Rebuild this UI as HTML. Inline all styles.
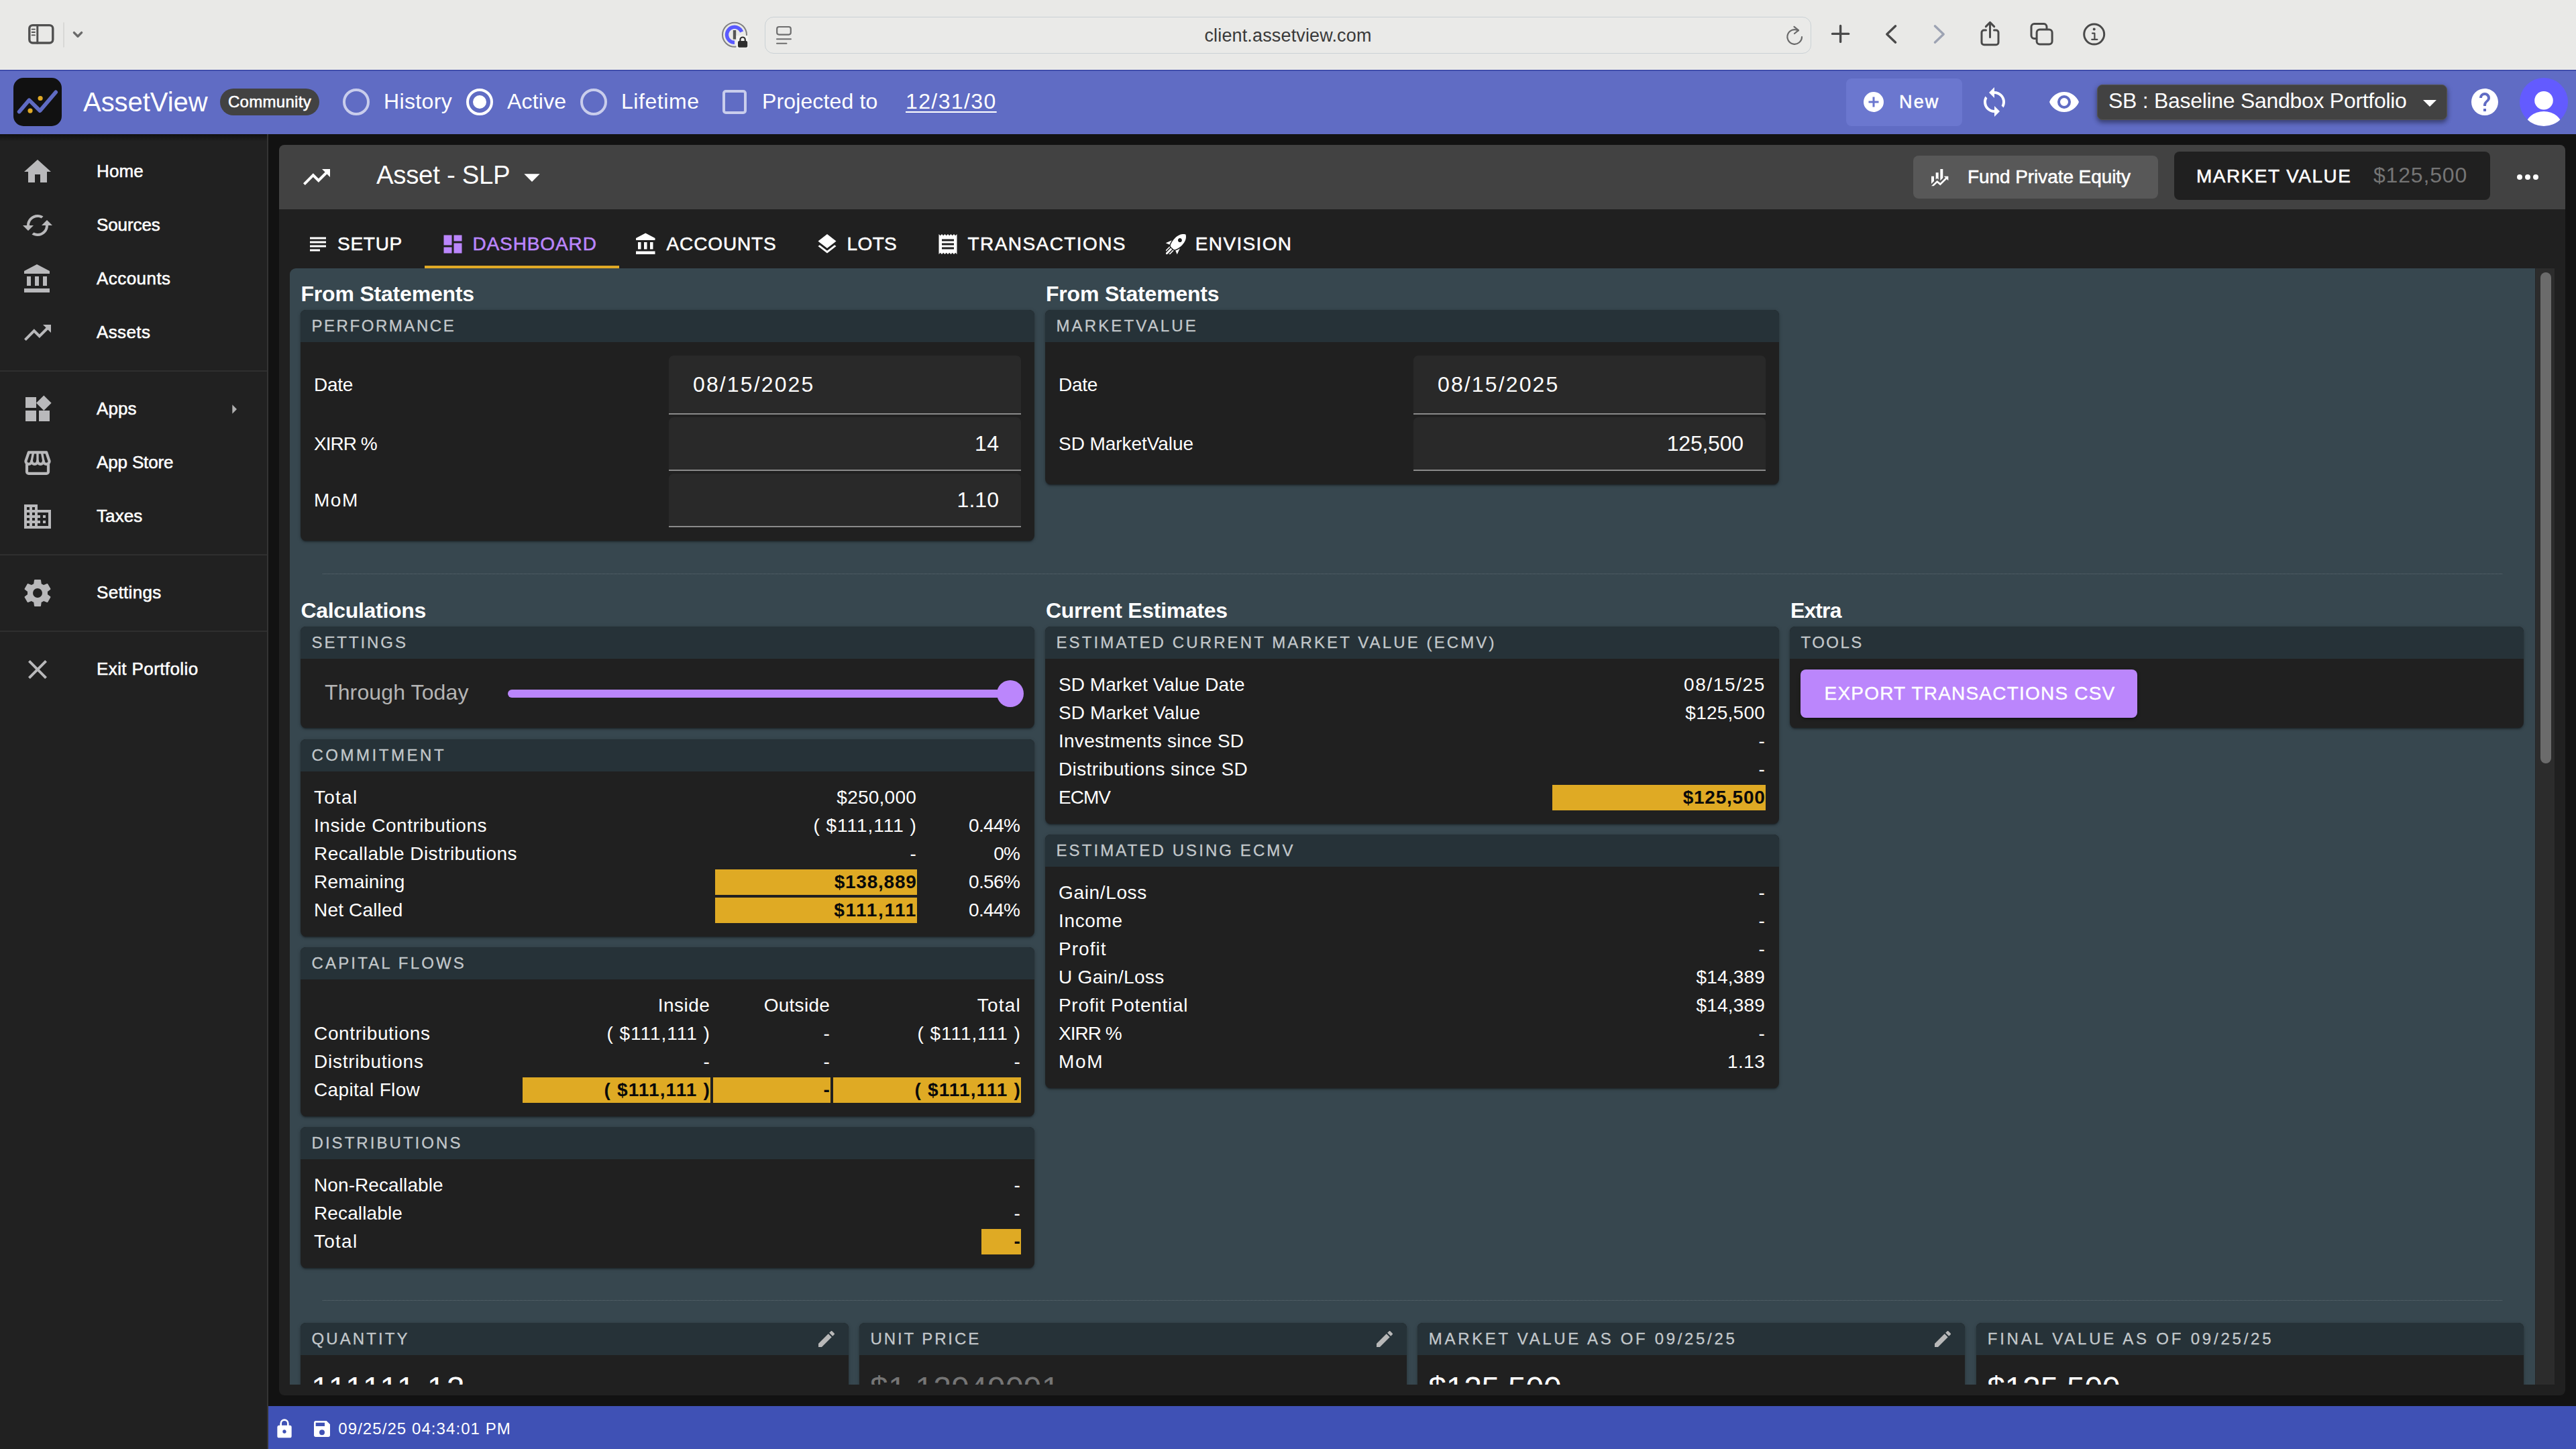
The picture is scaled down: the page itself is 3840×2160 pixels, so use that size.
<!DOCTYPE html>
<html lang="en"><head>
<meta charset="utf-8">
<title>AssetView</title>
<style>
*{box-sizing:border-box;margin:0;padding:0}
html,body{width:3840px;height:2160px;overflow:hidden;background:#121212}
body{font-family:"Liberation Sans",sans-serif;color:#fff;position:relative;-webkit-font-smoothing:antialiased}
.abs{position:absolute}
svg{display:block}
.m{-webkit-text-stroke:.55px currentColor}
.ch.m{-webkit-text-stroke:.3px currentColor}
#exp.m{-webkit-text-stroke:.4px currentColor;box-shadow:0 3px 2px -2px rgba(0,0,0,.3),0 2px 3px rgba(0,0,0,.2),0 1px 6px rgba(0,0,0,.16)}
/* ---------- browser chrome ---------- */
#chrome{position:absolute;left:0;top:0;width:3840px;height:104px;background:#e9e9e7;border-bottom:1px solid #f3f3ee}
#url{position:absolute;left:1140px;top:25px;width:1560px;height:55px;border:1.5px solid #cad1d5;border-radius:13px;background:#eaeae8}
#urltxt{position:absolute;left:0;top:0;width:3840px;text-align:center;font-size:27px;line-height:107px;color:#3a3a3a;letter-spacing:.45px}
/* ---------- app bar ---------- */
#appbar{position:absolute;left:0;top:104px;width:3840px;height:96px;background:#606cc4;border-top:1px solid #34409f;box-shadow:inset 0 1px 0 #4a58b6}
#logo{position:absolute;left:20px;top:116px;width:72px;height:72px;border-radius:15px;background:#111}
#brand{position:absolute;left:124px;top:128px;font-size:40px;line-height:48px;letter-spacing:0px}
#chip{position:absolute;left:328px;top:132px;width:148px;height:40px;border-radius:20px;background:#424242;font-size:24px;line-height:40px;text-align:center}
.radio{position:absolute;top:132px;width:40px;height:40px;border-radius:50%;border:4px solid #c9cdec}
.radio.on{border-color:#fff}
.radio.on:after{content:"";position:absolute;left:6px;top:6px;width:20px;height:20px;border-radius:50%;background:#fff}
.ab32{position:absolute;top:131px;font-size:32px;line-height:40px;white-space:nowrap}
#cbx{position:absolute;left:1077px;top:134px;width:36px;height:36px;border-radius:5px;border:4px solid #c9cdec}
#newbtn{position:absolute;left:2752px;top:117px;width:173px;height:71px;border-radius:8px;background:#6b77cf}
#pfsel{position:absolute;left:3126px;top:126px;width:522px;height:52.500px;border-radius:8px;background:#424242;border:1px solid #545454;box-shadow:0 4px 6px rgba(0,0,0,.3),0 2px 10px rgba(0,0,0,.2)}
#avatar{position:absolute;left:3756px;top:116px;width:72px;height:72px;border-radius:50%;background:#635bff;overflow:hidden}
/* ---------- sidebar ---------- */
#sidebar{position:absolute;left:0;top:200px;width:400px;height:1960px;background:#212121;border-right:2px solid #343434}
.nav{position:absolute;left:0;width:398px;height:80px}
.nav svg{position:absolute;left:32px;top:16px;width:48px;height:48px;fill:#b9b9bb}
.nav span{position:absolute;left:144px;top:-1px;font-size:26px;line-height:80px;white-space:nowrap}
.ndiv{position:absolute;left:0;width:398px;height:2px;background:#2f2f2f}
/* ---------- main card ---------- */
#card{position:absolute;left:416px;top:216px;width:3408px;height:1864px;border-radius:8px;background:#202020;overflow:hidden}
#tbar{position:absolute;left:0;top:0;width:3408px;height:96px;background:#424242}
#panel{position:absolute;left:16px;top:184px;width:3347px;height:1664px;background:#37474f;border-top-left-radius:9px;overflow:hidden}
#sbar{position:absolute;left:3363px;top:184px;width:29px;height:1664px;background:#2c2c2c;border-left:1px solid #262626}
#sthumb{position:absolute;left:7px;top:6px;width:16px;height:732px;border-radius:8px;background:#6b6b6b}
.tab{font-size:28px;line-height:40px;letter-spacing:3.4px;white-space:nowrap}

/* ---------- panel content ---------- */
.h{position:absolute;font-size:32px;line-height:40px;font-weight:700;white-space:nowrap;letter-spacing:-.1px}
.c{position:absolute;border-radius:8px;background:#202020;overflow:hidden;box-shadow:0 3px 2px -2px rgba(0,0,0,.3),0 2px 3px rgba(0,0,0,.2),0 1px 6px rgba(0,0,0,.16)}
.ch{height:48px;background:#263238;color:#c3c8cb;font-size:24px;line-height:48px;letter-spacing:6.3px;padding-left:16.5px;white-space:nowrap;position:relative}
.ch svg{position:absolute;right:17px;top:8px;width:32px;height:32px;fill:#b8b8b8}
.cb{padding:20px 20px 0 20px}
.r{position:relative;height:38px;margin-bottom:4px;font-size:28px;line-height:37px;letter-spacing:.6px;white-space:nowrap}
.r span{position:absolute;top:0;height:38px;text-align:right;padding-right:2px;letter-spacing:1.1px}
.r .g{background:#dfaa24;color:#0a0a0a;font-weight:700;letter-spacing:.9px}
.r .lb{left:0;text-align:left;letter-spacing:.6px}
.fl{position:absolute;left:20px;font-size:28px;line-height:40px;letter-spacing:.2px;white-space:nowrap}
.fd{position:absolute;left:549px;width:525px;background:#292929;border-bottom:2px solid #8a8a8a;border-radius:7px 7px 0 0;font-size:32px;line-height:40px;letter-spacing:3.2px;white-space:nowrap}
.fd span{position:absolute}
.hr{position:absolute;left:49px;width:3249px;height:0;border-top:1.5px dotted rgba(255,255,255,.2)}
.big{position:absolute;left:16px;top:18.4px;font-size:48px;line-height:64px;white-space:nowrap;letter-spacing:2.4px}
/* ---------- footer ---------- */
#footer{position:absolute;left:400px;top:2096px;width:3440px;height:64px;background:#3f51b5}
</style>
</head>
<body>
<div id="chrome">
  <div id="url"></div>
  <svg class="abs" style="left:0;top:0" width="3840" height="104" viewBox="0 0 3840 104" fill="none" stroke-linecap="round" stroke-linejoin="round">
    <!-- sidebar toggle -->
    <rect x="43.8" y="37.6" width="35" height="26.4" rx="5" stroke="#505050" stroke-width="3.4"></rect>
    <path d="M55.8 38V64" stroke="#505050" stroke-width="3"></path>
    <path d="M47.6 43.6H52M47.6 48H52M47.6 52.4H52" stroke="#505050" stroke-width="1.8"></path>
    <path d="M95 34V70" stroke="#d2d2d0" stroke-width="1.5"></path>
    <path d="M110.4 48.6L116 54.2L121.6 48.6" stroke="#6a6a6a" stroke-width="3.4"></path>
    <!-- password manager icon -->
    <circle cx="1095" cy="51.8" r="18" stroke="#808080" stroke-width="2"></circle>
    <path d="M1095 63.300A11.500 11.500 0 1 1 1105.700 47.600" stroke="#5a5aff" stroke-width="5.400" stroke-linecap="butt"></path>
    <rect x="1092.8" y="45" width="4.4" height="13.6" fill="#555" stroke="none"></rect>
    <rect x="1097.5" y="53" width="18" height="19" fill="#f3f3f1" stroke="none"></rect>
    <rect x="1100" y="61" width="14.2" height="9.8" rx="2" fill="#2e2e2e" stroke="none"></rect>
    <path d="M1103.4 61.5V59.2A3.7 3.7 0 0 1 1110.8 59.2V61.5" stroke="#2e2e2e" stroke-width="2.2"></path>
    <!-- reader icon -->
    <rect x="1158.2" y="40" width="20.6" height="11.6" rx="3" stroke="#6e6e6e" stroke-width="2.2"></rect>
    <path d="M1158 58.2H1179M1158 64.8H1172.5" stroke="#6e6e6e" stroke-width="2"></path>
    <!-- reload -->
    <path d="M2680.6 45.6A10.8 10.8 0 1 0 2686 55" stroke="#6a6a6a" stroke-width="2.2"></path>
    <path d="M2674.5 39.8L2681 45.2L2675 50" stroke="#6a6a6a" stroke-width="2.2"></path>
    <!-- plus -->
    <path d="M2731.5 50.4H2755.7M2743.6 38.4V62.4" stroke="#4a4a4a" stroke-width="3.4"></path>
    <!-- back / forward -->
    <path d="M2825.6 38.8L2812.8 51L2825.6 63.2" stroke="#4a4a4a" stroke-width="3.4"></path>
    <path d="M2884.4 38.8L2897.2 51L2884.4 63.2" stroke="#9da3b3" stroke-width="3.4"></path>
    <!-- share -->
    <path d="M2960.5 45H2957.5A3.5 3.5 0 0 0 2954 48.500V63.3A3.5 3.5 0 0 0 2957.5 66.800H2975.500A3.5 3.5 0 0 0 2979 63.3V48.5A3.5 3.5 0 0 0 2975.500 45H2972.500" stroke="#4a4a4a" stroke-width="3"></path>
    <path d="M2966.500 55.400V34M2960.300 39.600L2966.500 33.400L2972.700 39.600" stroke="#4a4a4a" stroke-width="3"></path>
    <!-- tabs -->
    <path d="M3034.600 57.500H3032.500A4.500 4.500 0 0 1 3028 53V40A4.500 4.500 0 0 1 3032.500 35.500H3046.500A4.500 4.500 0 0 1 3051 40V42.400" stroke="#4a4a4a" stroke-width="3"></path>
    <rect x="3036.100" y="43.900" width="23" height="22" rx="4.500" stroke="#4a4a4a" stroke-width="3"></rect>
    <!-- info -->
    <circle cx="3121.700" cy="51.100" r="15" stroke="#4a4a4a" stroke-width="3"></circle>
    <circle cx="3121.700" cy="43.600" r="2" fill="#4a4a4a" stroke="none"></circle>
    <path d="M3119 49.600H3122.400V58.600M3118.200 58.800H3126.400" stroke="#4a4a4a" stroke-width="2.200"></path>
  </svg>
  <div id="urltxt" style="letter-spacing: 0.15px;">client.assetview.com</div>
</div>
<div id="appbar"></div>
<div id="logo"><svg width="72" height="72" viewBox="0 0 72 72" fill="none"><path d="M8.600 50.600L23.500 33.200L39.600 49.100L63.200 21.300" stroke="#5f6bc3" stroke-width="5.700" stroke-linecap="round" stroke-linejoin="round"></path><circle cx="40.100" cy="30.500" r="3.600" fill="#e0a925"></circle><circle cx="25" cy="49.100" r="3.600" fill="#e0a925"></circle></svg></div>
<div id="brand" style="letter-spacing: -0.05px;">AssetView</div>
<div id="chip" class="m" style="letter-spacing: 0.29px;">Community</div>
<div class="radio" style="left:511px"></div><div class="ab32" style="left: 572px; letter-spacing: 0.37px;">History</div>
<div class="radio on" style="left:695px"></div><div class="ab32" style="left: 756px; letter-spacing: 0.2px;">Active</div>
<div class="radio" style="left:865px"></div><div class="ab32" style="left: 926px; letter-spacing: 0.57px;">Lifetime</div>
<div id="cbx"></div><div class="ab32" style="left: 1136px; letter-spacing: 0.13px;">Projected to</div>
<div class="ab32" style="left: 1350px; text-decoration: underline 2px; text-underline-offset: 4px; letter-spacing: 1.39px;">12/31/30</div>
<div id="newbtn"></div>
<svg class="abs" style="left:2775px;top:134px" width="36" height="36" viewBox="0 0 24 24" fill="#fff"><path d="M17,13H13V17H11V13H7V11H11V7H13V11H17M12,2A10,10 0 0,0 2,12A10,10 0 0,0 12,22A10,10 0 0,0 22,12A10,10 0 0,0 12,2Z"></path></svg>
<div id="newtxt" class="abs m" style="left: 2831px; top: 132px; font-size: 27px; line-height: 40px; letter-spacing: 2.14px;">New</div>
<svg class="abs" style="left:2949px;top:128px" width="48" height="48" viewBox="0 0 24 24" fill="#fff"><path d="M12,18A6,6 0 0,1 6,12C6,11 6.250,10.030 6.700,9.200L5.240,7.740C4.460,8.970 4,10.430 4,12A8,8 0 0,0 12,20V23L16,19L12,15M12,4V1L8,5L12,9V6A6,6 0 0,1 18,12C18,13 17.750,13.970 17.300,14.800L18.760,16.260C19.540,15.030 20,13.570 20,12A8,8 0 0,0 12,4Z"></path></svg>
<svg class="abs" style="left:3053px;top:128px" width="48" height="48" viewBox="0 0 24 24" fill="#fff"><path d="M12,9A3,3 0 0,0 9,12A3,3 0 0,0 12,15A3,3 0 0,0 15,12A3,3 0 0,0 12,9M12,17A5,5 0 0,1 7,12A5,5 0 0,1 12,7A5,5 0 0,1 17,12A5,5 0 0,1 12,17M12,4.500C7,4.500 2.730,7.610 1,12C2.730,16.390 7,19.500 12,19.500C17,19.500 21.270,16.390 23,12C21.270,7.610 17,4.500 12,4.500Z"></path></svg>
<div id="pfsel"></div>
<div id="pftxt" class="abs" style="left: 3143px; top: 130px; font-size: 32px; line-height: 40px; white-space: nowrap; letter-spacing: -0.29px;">SB : Baseline Sandbox Portfolio</div>
<svg class="abs" style="left:3598px;top:129px" width="48" height="48" viewBox="0 0 24 24" fill="#fff"><path d="M7,10L12,15L17,10H7Z"></path></svg>
<svg class="abs" style="left:3680px;top:128px" width="48" height="48" viewBox="0 0 24 24" fill="#fff"><path d="M15.070,11.250L14.170,12.170C13.450,12.890 13,13.500 13,15H11V14.500C11,13.390 11.450,12.390 12.170,11.670L13.410,10.410C13.780,10.050 14,9.550 14,9C14,7.890 13.100,7 12,7A2,2 0 0,0 10,9H8A4,4 0 0,1 12,5A4,4 0 0,1 16,9C16,9.880 15.640,10.670 15.070,11.250M13,19H11V17H13M12,2A10,10 0 0,0 2,12A10,10 0 0,0 12,22A10,10 0 0,0 22,12C22,6.470 17.500,2 12,2Z"></path></svg>
<div id="avatar"><svg width="72" height="72" viewBox="0 0 72 72" fill="#fff"><circle cx="36" cy="33.700" r="13.800"></circle><ellipse cx="36" cy="73" rx="27.500" ry="23"></ellipse></svg></div>
<div id="sidebar">
<div class="nav" style="top:16px"><svg viewBox="0 0 24 24"><path d="M10,20V14H14V20H19V12H22L12,3L2,12H5V20H10Z"></path></svg><span class="m" style="letter-spacing: 0.14px;">Home</span></div>
<div class="nav" style="top:96px"><svg viewBox="0 0 24 24"><path d="M19,8L15,12H18A6,6 0 0,1 12,18C11,18 10.030,17.750 9.200,17.300L7.740,18.760C8.970,19.540 10.430,20 12,20A8,8 0 0,0 20,12H23M6,12A6,6 0 0,1 12,6C13,6 13.970,6.250 14.800,6.700L16.260,5.240C15.030,4.460 13.570,4 12,4A8,8 0 0,0 4,12H1L5,16L9,12"></path></svg><span class="m" style="letter-spacing: -0.1px;">Sources</span></div>
<div class="nav" style="top:176px"><svg viewBox="0 0 24 24"><path d="M11.500,1L2,6V8H21V6M16,10V17H19V10M2,22H21V19H2M10,10V17H13V10M4,10V17H7V10H4Z"></path></svg><span class="m" style="letter-spacing: 0.45px;">Accounts</span></div>
<div class="nav" style="top:256px"><svg viewBox="0 0 24 24"><path d="M16,6L18.290,8.290L13.410,13.170L9.410,9.170L2,16.590L3.410,18L9.410,12L13.410,16L19.710,9.710L22,12V6H16Z"></path></svg><span class="m" style="letter-spacing: 0.39px;">Assets</span></div>
<div class="ndiv" style="top:352px"></div>
<div class="nav" style="top:370px"><svg viewBox="0 0 24 24"><path d="M3,3H11V11H3V3M3,13H11V21H3V13M13,13H21V21H13V13M16.660,1.690L22.310,7.340L16.660,13L11,7.340L16.660,1.690Z"></path></svg><span class="m" style="letter-spacing: 0.12px;">Apps</span><svg viewBox="0 0 24 24" style="left:333px;top:24px;width:32px;height:32px;fill:#b0b0b0"><path d="M10,17L15,12L10,7V17Z"></path></svg></div>
<div class="nav" style="top:450px"><svg viewBox="0 0 48 48" style="fill:none;stroke:#b9b9bb;stroke-width:4.200;stroke-linejoin:round"><path d="M10.800 8.400H37.200L41.600 21.400A4.400 4.400 0 0 1 32.800 21.400A4.400 4.400 0 0 1 24 21.400A4.400 4.400 0 0 1 15.200 21.400A4.400 4.400 0 0 1 6.400 21.400Z"></path><path d="M17.600 8.400L15.200 21M24 8.400V21M30.400 8.400L32.800 21" stroke-width="3.400"></path><path d="M8 26V37.200A2.600 2.600 0 0 0 10.600 39.800H37.400A2.600 2.600 0 0 0 40 37.200V26"></path></svg><span class="m" style="letter-spacing: -0.15px;">App Store</span></div>
<div class="nav" style="top:530px"><svg viewBox="0 0 24 24"><path d="M18,15H16V17H18M18,11H16V13H18M20,19H12V17H14V15H12V13H14V11H12V9H20M10,7H8V5H10M10,11H8V9H10M10,15H8V13H10M10,19H8V17H10M6,7H4V5H6M6,11H4V9H6M6,15H4V13H6M6,19H4V17H6M12,7V3H2V21H22V7H12Z"></path></svg><span class="m" style="letter-spacing: 0.1px;">Taxes</span></div>
<div class="ndiv" style="top:626px"></div>
<div class="nav" style="top:644px"><svg viewBox="0 0 24 24"><path d="M12,15.500A3.500,3.500 0 0,1 8.500,12A3.500,3.500 0 0,1 12,8.500A3.500,3.500 0 0,1 15.500,12A3.500,3.500 0 0,1 12,15.500M19.430,12.970C19.470,12.650 19.500,12.330 19.500,12C19.500,11.670 19.470,11.340 19.430,11L21.540,9.370C21.730,9.220 21.780,8.950 21.660,8.730L19.660,5.270C19.540,5.050 19.270,4.960 19.050,5.050L16.560,6.050C16.040,5.660 15.500,5.320 14.870,5.070L14.500,2.420C14.460,2.180 14.250,2 14,2H10C9.750,2 9.540,2.180 9.500,2.420L9.130,5.070C8.500,5.320 7.960,5.660 7.440,6.050L4.950,5.050C4.730,4.960 4.460,5.050 4.340,5.270L2.340,8.730C2.210,8.950 2.270,9.220 2.460,9.370L4.570,11C4.530,11.340 4.500,11.670 4.500,12C4.500,12.330 4.530,12.650 4.570,12.970L2.460,14.630C2.270,14.780 2.210,15.050 2.340,15.270L4.340,18.730C4.460,18.950 4.730,19.030 4.950,18.950L7.440,17.940C7.960,18.340 8.500,18.680 9.130,18.930L9.500,21.580C9.540,21.820 9.750,22 10,22H14C14.250,22 14.460,21.820 14.500,21.580L14.870,18.930C15.500,18.670 16.040,18.340 16.560,17.940L19.050,18.950C19.270,19.030 19.540,18.950 19.660,18.730L21.660,15.270C21.780,15.050 21.730,14.780 21.540,14.630L19.430,12.970Z"></path></svg><span class="m" style="letter-spacing: 0.32px;">Settings</span></div>
<div class="ndiv" style="top:740px"></div>
<div class="nav" style="top:758px"><svg viewBox="0 0 24 24"><path d="M19,6.410L17.590,5L12,10.590L6.410,5L5,6.410L10.590,12L5,17.590L6.410,19L12,13.410L17.590,19L19,17.590L13.410,12L19,6.410Z"></path></svg><span class="m" style="letter-spacing: 0.4px;">Exit Portfolio</span></div>
</div>
<div class="abs" style="left:0;top:200px;width:398px;height:11px;background:linear-gradient(rgba(0,0,0,.5),rgba(0,0,0,0))"></div>
<div id="card">
  <div id="tbar"></div>
<svg class="abs" style="left:32.0px;top:24.0px" width="48" height="48" viewBox="0 0 24 24" fill="#fff"><path d="M16,6L18.290,8.290L13.410,13.170L9.410,9.170L2,16.590L3.410,18L9.410,12L13.410,16L19.710,9.710L22,12V6H16Z"></path></svg>
<div id="atitle" class="abs" style="left: 145px; top: 21.4px; font-size: 38.4px; line-height: 48px; white-space: nowrap; letter-spacing: -0.3px;">Asset - SLP</div>
<svg class="abs" style="left:349.0px;top:20.3px" width="56" height="56" viewBox="0 0 24 24" fill="#fff"><path d="M7,10L12,15L17,10H7Z"></path></svg>
<div class="abs" style="left:2436px;top:16px;width:365px;height:64px;border-radius:8px;background:#585858"></div>
<svg class="abs" style="left:2459.4px;top:31.7px" width="32" height="32" viewBox="0 0 24 24" fill="#fff"><path d="M6,16.500L3,19.440V11H6M11,14.660L9.430,13.320L8,14.640V7H11M16,13L13,16V3H16M18.810,12.810L17,11H22V16L20.210,14.210L13,21.360L9.530,18.340L5.750,22H3L9.470,15.660L13,18.640"></path></svg>
<div id="fpe" class="abs m" style="left: 2517px; top: 28.3px; font-size: 28px; line-height: 40px; white-space: nowrap; letter-spacing: -0.07px;">Fund Private Equity</div>
<div class="abs" style="left:2825px;top:10px;width:471px;height:72px;border-radius:8px;background:#202020"></div>
<div id="mvl" class="abs m" style="left: 2858px; top: 26.5px; font-size: 28px; line-height: 40px; letter-spacing: 1.47px; white-space: nowrap;">MARKET VALUE</div>
<div id="mvv" class="abs" style="left: 3122px; top: 24.9px; font-size: 32px; line-height: 40px; letter-spacing: 0.82px; color: rgb(117, 117, 117); white-space: nowrap;">$125,500</div>
<svg class="abs" style="left:3328.0px;top:24.0px" width="48" height="48" viewBox="0 0 24 24" fill="#fff"><path d="M16,12A2,2 0 0,1 18,10A2,2 0 0,1 20,12A2,2 0 0,1 18,14A2,2 0 0,1 16,12M10,12A2,2 0 0,1 12,10A2,2 0 0,1 14,12A2,2 0 0,1 12,14A2,2 0 0,1 10,12M4,12A2,2 0 0,1 6,10A2,2 0 0,1 8,12A2,2 0 0,1 6,14A2,2 0 0,1 4,12Z"></path></svg>
<svg class="abs" style="left:40.0px;top:130.0px" width="36" height="36" viewBox="0 0 24 24" fill="#fff"><path d="M4,5H20V7H4V5M4,9H20V11H4V9M4,13H20V15H4V13M4,17H14V19H4V17Z"></path></svg>
<div class="abs m tab" style="left: 87px; top: 128.3px; color: rgb(255, 255, 255); letter-spacing: 0.73px;">SETUP</div>
<svg class="abs" style="left:241.0px;top:130.0px" width="36" height="36" viewBox="0 0 24 24" fill="#bb86fc"><path d="M13,3V9H21V3M13,21H21V11H13M3,21H11V15H3M3,13H11V3H3V13Z"></path></svg>
<div class="abs m tab" style="left: 288.4px; top: 128.3px; color: rgb(187, 134, 252); letter-spacing: 0.89px;">DASHBOARD</div>
<svg class="abs" style="left:529.0px;top:130.0px" width="36" height="36" viewBox="0 0 24 24" fill="#fff"><path d="M11.500,1L2,6V8H21V6M16,10V17H19V10M2,22H21V19H2M10,10V17H13V10M4,10V17H7V10H4Z"></path></svg>
<div class="abs m tab" style="left: 577.5px; top: 128.3px; color: rgb(255, 255, 255); letter-spacing: 0.88px;">ACCOUNTS</div>
<svg class="abs" style="left:799.3px;top:130.0px" width="36" height="36" viewBox="0 0 24 24" fill="#fff"><path d="M12,16L19.360,10.270L21,9L12,2L3,9L4.630,10.270M12,18.540L4.620,12.810L3,14.070L12,21.070L21,14.070L19.370,12.800L12,18.540Z"></path></svg>
<div class="abs m tab" style="left: 846.6px; top: 128.3px; color: rgb(255, 255, 255); letter-spacing: 0.34px;">LOTS</div>
<svg class="abs" style="left:978.5px;top:130.0px" width="36" height="36" viewBox="0 0 24 24" fill="#fff"><path d="M3,22L4.500,20.500L6,22L7.500,20.500L9,22L10.500,20.500L12,22L13.500,20.500L15,22L16.500,20.500L18,22L19.500,20.500L21,22V2L19.500,3.500L18,2L16.500,3.500L15,2L13.500,3.500L12,2L10.500,3.500L9,2L7.500,3.500L6,2L4.500,3.500L3,2M18,9H6V7H18M18,13H6V11H18M18,17H6V15H18V17Z"></path></svg>
<div class="abs m tab" style="left: 1026.6px; top: 128.3px; color: rgb(255, 255, 255); letter-spacing: 1.41px;">TRANSACTIONS</div>
<svg class="abs" style="left:1318.8px;top:130.0px" width="36" height="36" viewBox="0 0 24 24" fill="#fff"><path d="M13.130 22.190L11.500 18.360C13.070 17.780 14.540 17 15.900 16.090L13.130 22.190M5.640 12.500L1.810 10.870L7.910 8.100C7 9.460 6.220 10.930 5.640 12.500M21.610 2.390C21.610 2.390 16.660 .269 11 5.930C8.810 8.120 7.500 10.530 6.650 12.640C6.370 13.390 6.560 14.210 7.110 14.770L9.240 16.890C9.790 17.450 10.610 17.630 11.360 17.350C13.500 16.530 15.880 15.190 18.070 13C23.730 7.340 21.610 2.390 21.610 2.390M14.540 9.460C13.760 8.680 13.760 7.410 14.540 6.630S16.590 5.850 17.370 6.630C18.140 7.410 18.150 8.680 17.370 9.460C16.590 10.240 15.320 10.240 14.540 9.460M8.880 16.530L7.470 15.120L8.880 16.530M6.240 22L9.880 18.360C9.540 18.270 9.210 18.120 8.910 17.910L4.830 22H6.240M2 22H3.410L8.180 17.240L6.760 15.830L2 20.590V22M2 19.170L6.090 15.090C5.880 14.790 5.730 14.470 5.640 14.120L2 17.760V19.170Z"></path></svg>
<div class="abs m tab" style="left: 1365.8px; top: 128.3px; color: rgb(255, 255, 255); letter-spacing: 1.35px;">ENVISION</div>
<div class="abs" style="left:217px;top:180px;width:290px;height:4px;background:#dfa926"></div>
  <div id="panel">
<div class="h" style="left: 16.5px; top: 17.5px; letter-spacing: -0.2px;">From Statements</div>
<div class="h" style="left: 1127px; top: 17.5px; letter-spacing: -0.2px;">From Statements</div>
<div class="c" style="left:16.0px;top:62.0px;width:1094px;height:344px"><div class="ch m" style="letter-spacing: 2.55px;">PERFORMANCE</div><div class="fl" style="top: 92px; letter-spacing: -0.31px;">Date</div><div class="fl" style="top: 180px; letter-spacing: -1px;">XIRR %</div><div class="fl" style="top: 264px; letter-spacing: 1.52px;">MoM</div><div class="fd" style="top:68px;height:88px"><span style="left: 36px; top: 22.6px; letter-spacing: 2.13px;">08/15/2025</span></div><div class="fd" style="top:160px;height:80px"><span style="right: 32.62px; top: 18.9px; letter-spacing: 0.38px;">14</span></div><div class="fd" style="top:244px;height:80px"><span style="right: 32.96px; top: 18.9px; letter-spacing: 0.04px;">1.10</span></div></div>
<div class="c" style="left:1126.0px;top:62.0px;width:1094px;height:260px"><div class="ch m" style="letter-spacing: 3.13px;">MARKETVALUE</div><div class="fl" style="top: 92px; letter-spacing: -0.31px;">Date</div><div class="fl" style="top: 180px; letter-spacing: -0.05px;">SD MarketValue</div><div class="fd" style="top:68px;height:88px"><span style="left: 36px; top: 22.6px; letter-spacing: 2.13px;">08/15/2025</span></div><div class="fd" style="top:160px;height:80px"><span style="right: 33.24px; top: 18.9px; letter-spacing: -0.24px;">125,500</span></div></div>
<div class="hr" style="top:454.6px"></div>
<div class="h" style="left: 16.5px; top: 489.6px; letter-spacing: -0.32px;">Calculations</div>
<div class="h" style="left: 1127px; top: 489.6px; letter-spacing: -0.28px;">Current Estimates</div>
<div class="h" style="left: 2237px; top: 489.6px; letter-spacing: -0.9px;">Extra</div>
<div class="c" style="left:16.0px;top:534.0px;width:1094px;height:151px"><div class="ch m" style="letter-spacing: 2.92px;">SETTINGS</div><div class="abs" style="left: 36px; top: 78px; font-size: 32px; line-height: 40px; color: rgb(180, 180, 180); white-space: nowrap; letter-spacing: 0.13px;" id="thru">Through Today</div><div class="abs" style="left:308.6px;top:94px;width:760px;height:12px;border-radius:6px;background:#bb86fc"></div><div class="abs" style="left:1038px;top:80px;width:40px;height:40px;border-radius:50%;background:#bb86fc"></div></div>
<div class="c" style="left:16.0px;top:701.6px;width:1094px;height:294px"><div class="ch m" style="letter-spacing: 3.53px;">COMMITMENT</div><div class="cb"><div class="r"><span class="lb" style="letter-spacing: 1.24px;">Total</span><span style="left: 598px; width: 301px; letter-spacing: 0.24px; padding-right: 0.96px;">$250,000</span></div><div class="r"><span class="lb" style="letter-spacing: 0.53px;">Inside Contributions</span><span style="left: 598px; width: 301px; letter-spacing: 0.96px; padding-right: 0.24px;">( $111,111 )</span><span style="left: 903px; width: 151px; letter-spacing: -0.67px; padding-right: 1.87px;">0.44%</span></div><div class="r"><span class="lb" style="letter-spacing: 0.43px;">Recallable Distributions</span><span style="left: 598px; width: 301px; letter-spacing: 0px; padding-right: 1.2px;">-</span><span style="left: 903px; width: 151px; letter-spacing: -1px; padding-right: 2.2px;">0%</span></div><div class="r"><span class="lb" style="letter-spacing: 0.19px;">Remaining</span><span class="g" style="left: 598px; width: 301px; letter-spacing: 0.76px; padding-right: 0.44px;">$138,889</span><span style="left: 903px; width: 151px; letter-spacing: -0.67px; padding-right: 1.87px;">0.56%</span></div><div class="r"><span class="lb" style="letter-spacing: 0.17px;">Net Called</span><span class="g" style="left: 598px; width: 301px; letter-spacing: 1.65px; padding-right: 0px;">$111,111</span><span style="left: 903px; width: 151px; letter-spacing: -0.67px; padding-right: 1.87px;">0.44%</span></div></div></div>
<div class="c" style="left:16.0px;top:1011.6px;width:1094px;height:252px"><div class="ch m" style="letter-spacing: 3.16px;">CAPITAL FLOWS</div><div class="cb"><div class="r"><span class="lb"></span><span style="left: 311px; width: 280px; letter-spacing: 0.45px; padding-right: 0.75px;">Inside</span><span style="left: 595px; width: 175px; letter-spacing: 0.28px; padding-right: 0.92px;">Outside</span><span style="left: 774px; width: 280px; letter-spacing: 1.24px; padding-right: 0px;">Total</span></div><div class="r"><span class="lb" style="letter-spacing: 0.66px;">Contributions</span><span style="left: 311px; width: 280px; letter-spacing: 0.96px; padding-right: 0.24px;">( $111,111 )</span><span style="left: 595px; width: 175px; letter-spacing: 0px; padding-right: 1.2px;">-</span><span style="left: 774px; width: 280px; letter-spacing: 0.96px; padding-right: 0.24px;">( $111,111 )</span></div><div class="r"><span class="lb" style="letter-spacing: 0.74px;">Distributions</span><span style="left: 311px; width: 280px; letter-spacing: 0px; padding-right: 1.2px;">-</span><span style="left: 595px; width: 175px; letter-spacing: 0px; padding-right: 1.2px;">-</span><span style="left: 774px; width: 280px; letter-spacing: 0px; padding-right: 1.2px;">-</span></div><div class="r"><span class="lb" style="letter-spacing: 0.34px;">Capital Flow</span><span class="g" style="left: 311px; width: 280px; letter-spacing: 1.13px; padding-right: 0.07px;">( $111,111 )</span><span class="g" style="left: 595px; width: 175px; letter-spacing: 0px; padding-right: 1.2px;">-</span><span class="g" style="left: 774px; width: 280px; letter-spacing: 1.13px; padding-right: 0.07px;">( $111,111 )</span></div></div></div>
<div class="c" style="left:16.0px;top:1279.6px;width:1094px;height:210px"><div class="ch m" style="letter-spacing: 3.05px;">DISTRIBUTIONS</div><div class="cb"><div class="r"><span class="lb" style="letter-spacing: 0.09px;">Non-Recallable</span><span style="left: 995px; width: 59px; letter-spacing: 0px; padding-right: 1.2px;">-</span></div><div class="r"><span class="lb" style="letter-spacing: 0.12px;">Recallable</span><span style="left: 995px; width: 59px; letter-spacing: 0px; padding-right: 1.2px;">-</span></div><div class="r"><span class="lb" style="letter-spacing: 1.24px;">Total</span><span class="g" style="left: 995px; width: 59px; letter-spacing: 0px; padding-right: 1.2px;">-</span></div></div></div>
<div class="c" style="left:1126.0px;top:534.0px;width:1094px;height:294px"><div class="ch m" style="letter-spacing: 3.11px;">ESTIMATED CURRENT MARKET VALUE (ECMV)</div><div class="cb"><div class="r"><span class="lb" style="letter-spacing: 0.06px;">SD Market Value Date</span><span style="left: 736px; width: 318px; letter-spacing: 1.62px; padding-right: 0px;">08/15/25</span></div><div class="r"><span class="lb" style="letter-spacing: 0.11px;">SD Market Value</span><span style="left: 736px; width: 318px; letter-spacing: 0.24px; padding-right: 0.96px;">$125,500</span></div><div class="r"><span class="lb" style="letter-spacing: 0.28px;">Investments since SD</span><span style="left: 736px; width: 318px; letter-spacing: 0px; padding-right: 1.2px;">-</span></div><div class="r"><span class="lb" style="letter-spacing: 0.37px;">Distributions since SD</span><span style="left: 736px; width: 318px; letter-spacing: 0px; padding-right: 1.2px;">-</span></div><div class="r"><span class="lb" style="letter-spacing: -1px;">ECMV</span><span class="g" style="left: 736px; width: 318px; letter-spacing: 0.76px; padding-right: 0.44px;">$125,500</span></div></div></div>
<div class="c" style="left:1126.0px;top:844.0px;width:1094px;height:378px"><div class="ch m" style="letter-spacing: 3.09px;">ESTIMATED USING ECMV</div><div class="cb"><div class="r"><span class="lb" style="letter-spacing: 0.65px;">Gain/Loss</span><span style="left: 736px; width: 318px; letter-spacing: 0px; padding-right: 1.2px;">-</span></div><div class="r"><span class="lb" style="letter-spacing: 0.66px;">Income</span><span style="left: 736px; width: 318px; letter-spacing: 0px; padding-right: 1.2px;">-</span></div><div class="r"><span class="lb" style="letter-spacing: 1.04px;">Profit</span><span style="left: 736px; width: 318px; letter-spacing: 0px; padding-right: 1.2px;">-</span></div><div class="r"><span class="lb" style="letter-spacing: 0.31px;">U Gain/Loss</span><span style="left: 736px; width: 318px; letter-spacing: 0.19px; padding-right: 1.01px;">$14,389</span></div><div class="r"><span class="lb" style="letter-spacing: 0.69px;">Profit Potential</span><span style="left: 736px; width: 318px; letter-spacing: 0.19px; padding-right: 1.01px;">$14,389</span></div><div class="r"><span class="lb" style="letter-spacing: -1px;">XIRR %</span><span style="left: 736px; width: 318px; letter-spacing: 0px; padding-right: 1.2px;">-</span></div><div class="r"><span class="lb" style="letter-spacing: 1.71px;">MoM</span><span style="left: 736px; width: 318px; letter-spacing: 0.43px; padding-right: 0.77px;">1.13</span></div></div></div>
<div class="c" style="left:2236.0px;top:534.0px;width:1094px;height:151px"><div class="ch m" style="letter-spacing: 2.48px;">TOOLS</div><div class="abs m" style="left: 16px; top: 64px; width: 502px; height: 72px; border-radius: 8px; background: rgb(187, 134, 252); font-size: 28px; line-height: 72px; letter-spacing: 1.21px; text-align: center; white-space: nowrap; padding-left: 3px;" id="exp">EXPORT TRANSACTIONS CSV</div></div>
<div class="hr" style="top:1538px"></div>
<div class="c" style="left:16.0px;top:1572.0px;width:816.5px;height:140px"><div class="ch m" style="letter-spacing: 3.11px;">QUANTITY<svg viewBox="0 0 24 24"><path d="M20.710,7.040C21.100,6.650 21.100,6 20.710,5.630L18.370,3.290C18,2.900 17.350,2.900 16.960,3.290L15.120,5.120L18.870,8.870M3,17.250V21H6.750L17.810,9.930L14.060,6.180L3,17.250Z"></path></svg></div><div style="position:relative"><div class="big" style="color: rgb(255, 255, 255); letter-spacing: 2.42px;">111111.12</div></div></div>
<div class="c" style="left:849.0px;top:1572.0px;width:815.5px;height:140px"><div class="ch m" style="letter-spacing: 2.9px;">UNIT PRICE<svg viewBox="0 0 24 24"><path d="M20.710,7.040C21.100,6.650 21.100,6 20.710,5.630L18.370,3.290C18,2.900 17.350,2.900 16.960,3.290L15.120,5.120L18.870,8.870M3,17.250V21H6.750L17.810,9.930L14.060,6.180L3,17.250Z"></path></svg></div><div style="position:relative"><div class="big" style="color: rgb(117, 117, 117); letter-spacing: 0.21px;">$1.12949091</div></div></div>
<div class="c" style="left:1681.3px;top:1572.0px;width:816.2px;height:140px"><div class="ch m" style="letter-spacing: 3.67px;">MARKET VALUE AS OF 09/25/25<svg viewBox="0 0 24 24"><path d="M20.710,7.040C21.100,6.650 21.100,6 20.710,5.630L18.370,3.290C18,2.900 17.350,2.900 16.960,3.290L15.120,5.120L18.870,8.870M3,17.250V21H6.750L17.810,9.930L14.060,6.180L3,17.250Z"></path></svg></div><div style="position:relative"><div class="big" style="color: rgb(255, 255, 255); letter-spacing: -0.27px;">$125,500</div></div></div>
<div class="c" style="left:2514.2px;top:1572.0px;width:815.7px;height:140px"><div class="ch m" style="letter-spacing: 3.79px;">FINAL VALUE AS OF 09/25/25</div><div style="position:relative"><div class="big" style="color: rgb(255, 255, 255); letter-spacing: -0.27px;">$125,500</div></div></div>
</div>
  <div id="sbar"><div id="sthumb"></div></div>
</div>
<div id="footer">
<svg class="abs" style="left:8.3px;top:18.4px" width="32" height="32" viewBox="0 0 24 24" fill="#fff"><path d="M12,17A2,2 0 0,0 14,15C14,13.890 13.100,13 12,13A2,2 0 0,0 10,15A2,2 0 0,0 12,17M18,8A2,2 0 0,1 20,10V20A2,2 0 0,1 18,22H6A2,2 0 0,1 4,20V10C4,8.890 4.900,8 6,8H7V6A5,5 0 0,1 12,1A5,5 0 0,1 17,6V8H18M12,3A3,3 0 0,0 9,6V8H15V6A3,3 0 0,0 12,3Z"></path></svg>
<svg class="abs" style="left:63.700px;top:17.600px" width="32" height="32" viewBox="0 0 24 24" fill="#fff"><path d="M15,9H5V5H15M12,19A3,3 0 0,1 9,16A3,3 0 0,1 12,13A3,3 0 0,1 15,16A3,3 0 0,1 12,19M17,3H5C3.890,3 3,3.900 3,5V19A2,2 0 0,0 5,21H19A2,2 0 0,0 21,19V7L17,3Z"></path></svg>
<div id="ftxt" class="abs" style="left: 104.3px; top: 17.7px; font-size: 24px; line-height: 32px; letter-spacing: 1.07px; white-space: nowrap;">09/25/25 04:34:01 PM</div>
</div>




</body></html>
